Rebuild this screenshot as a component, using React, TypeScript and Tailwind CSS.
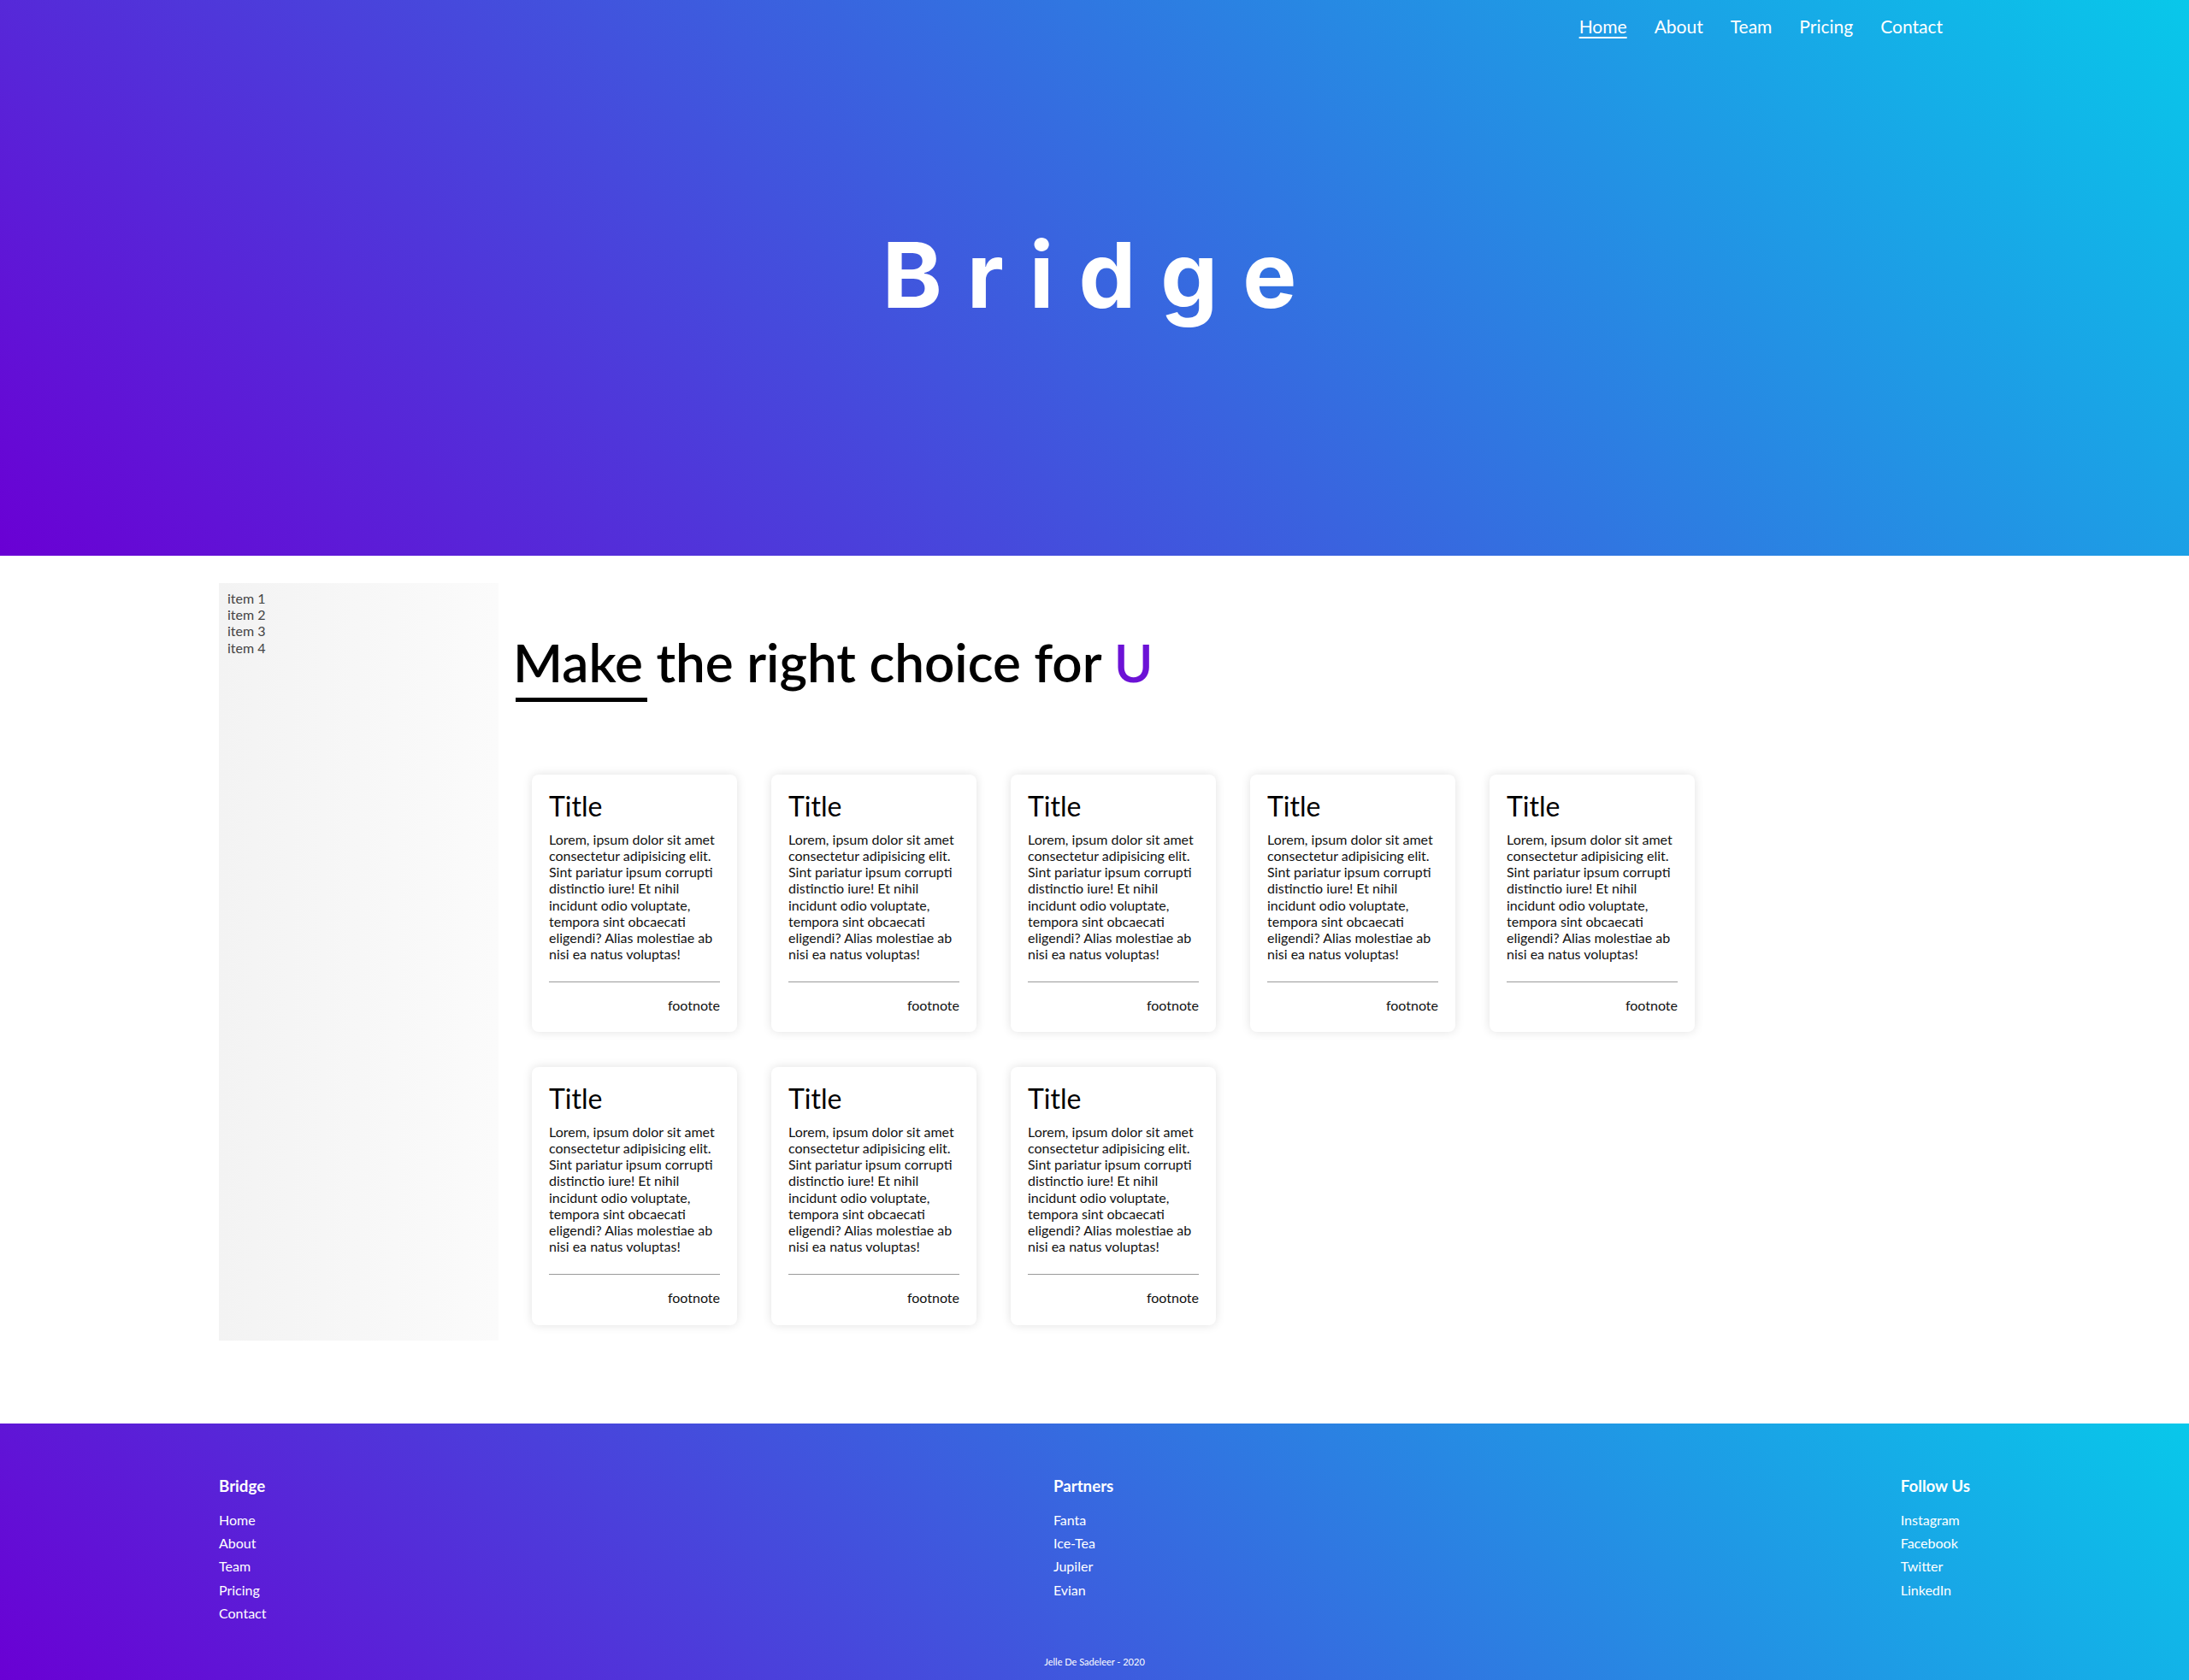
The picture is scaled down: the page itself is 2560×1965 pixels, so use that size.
const navLinks = ["Home", "About", "Team", "Pricing", "Contact"];

const lorem =
  "Lorem, ipsum dolor sit amet consectetur adipisicing elit. Sint pariatur ipsum corrupti distinctio iure! Et nihil incidunt odio voluptate, tempora sint obcaecati eligendi? Alias molestiae ab nisi ea natus voluptas!";

const footerCols = [
  { title: "Bridge", links: ["Home", "About", "Team", "Pricing", "Contact"] },
  { title: "Partners", links: ["Fanta", "Ice-Tea", "Jupiler", "Evian"] },
  { title: "Follow Us", links: ["Instagram", "Facebook", "Twitter", "LinkedIn"] },
];

function Card() {
  return (
    <div className="w-[240px] bg-white rounded-[8px] shadow-[0_0_12px_rgba(0,0,0,0.12)] px-[20px] pt-[18px] pb-[22px]">
      <h2 className="text-[32px] leading-[1.2] text-black">Title</h2>
      <p className="mt-[9px] text-[16px] leading-[1.2] text-[#111]">{lorem}</p>
      <hr className="mt-[23px] border-0 h-px bg-[#9a9a9a]" />
      <p className="mt-[17px] text-right text-[16px] leading-[1.2] text-[#111]">footnote</p>
    </div>
  );
}

export default function App() {
  return (
    <div className="min-h-screen bg-white font-['Lato','Liberation_Sans',sans-serif]">
      {/* ---- Header ---- */}
      <header className="h-[650px] flex flex-col bg-[linear-gradient(45deg,#6a00d4,#08c8ea)]">
        <nav className="w-[2048px] mx-auto flex justify-end pt-[18px] pr-[16px]">
          {navLinks.map((l, i) => (
            <a
              key={l}
              href="#"
              className={`px-[16px] text-[21px] leading-[1.2] text-white ${i === 0 ? "underline underline-offset-[4px] decoration-[2px]" : ""}`}
            >
              {l}
            </a>
          ))}
        </nav>
        <div className="flex-1 flex items-center justify-center pb-[50px]">
          <h1 className="font-['Inter','Open_Sans',sans-serif] font-bold text-[106px] leading-none text-white tracking-[29px] pl-[17px]">
            Bridge
          </h1>
        </div>
      </header>

      {/* ---- Content ---- */}
      <main className="w-[2048px] mx-auto mt-[32px] mb-[97px] flex">
        <aside className="w-[327px] shrink-0 bg-[linear-gradient(to_right,#f3f3f3,#fbfbfb)] px-[10px] pt-2">
          <ul className="text-[16px] leading-[1.2] text-[#444]">
            <li>item 1</li>
            <li>item 2</li>
            <li>item 3</li>
            <li>item 4</li>
          </ul>
        </aside>
        <section className="flex-1 pl-[17px] pb-[18px]">
          <h1 className="mt-[55px] text-[62px] leading-[1.2] font-semibold text-black">
            Make the right choice for <span className="text-[#6c12d6]">U</span>
          </h1>
          <div className="mt-[5px] ml-[3px] w-[154px] h-[5px] bg-black" />
          <div className="pt-[85px] pl-[22px] grid grid-cols-[repeat(5,240px)] gap-x-[40px] gap-y-[41px]">
            {Array.from({ length: 8 }).map((_, i) => (
              <Card key={i} />
            ))}
          </div>
        </section>
      </main>

      {/* ---- Footer ---- */}
      <footer className="h-[301px] bg-[linear-gradient(45deg,#6a00d4,#08c8ea)] text-white flex flex-col">
        <div className="w-[2048px] mx-auto flex justify-between pt-[62px]">
          {footerCols.map((col) => (
            <div key={col.title}>
              <h3 className="text-[18.72px] leading-[1.2] font-bold">{col.title}</h3>
              <ul className="mt-[19px] flex flex-col gap-[8px] text-[16px] leading-[1.2]">
                {col.links.map((l) => (
                  <li key={l}>{l}</li>
                ))}
              </ul>
            </div>
          ))}
        </div>
        <p className="mt-auto mb-[15px] text-center text-[11px] leading-[1.2]">Jelle De Sadeleer - 2020</p>
      </footer>
    </div>
  );
}
